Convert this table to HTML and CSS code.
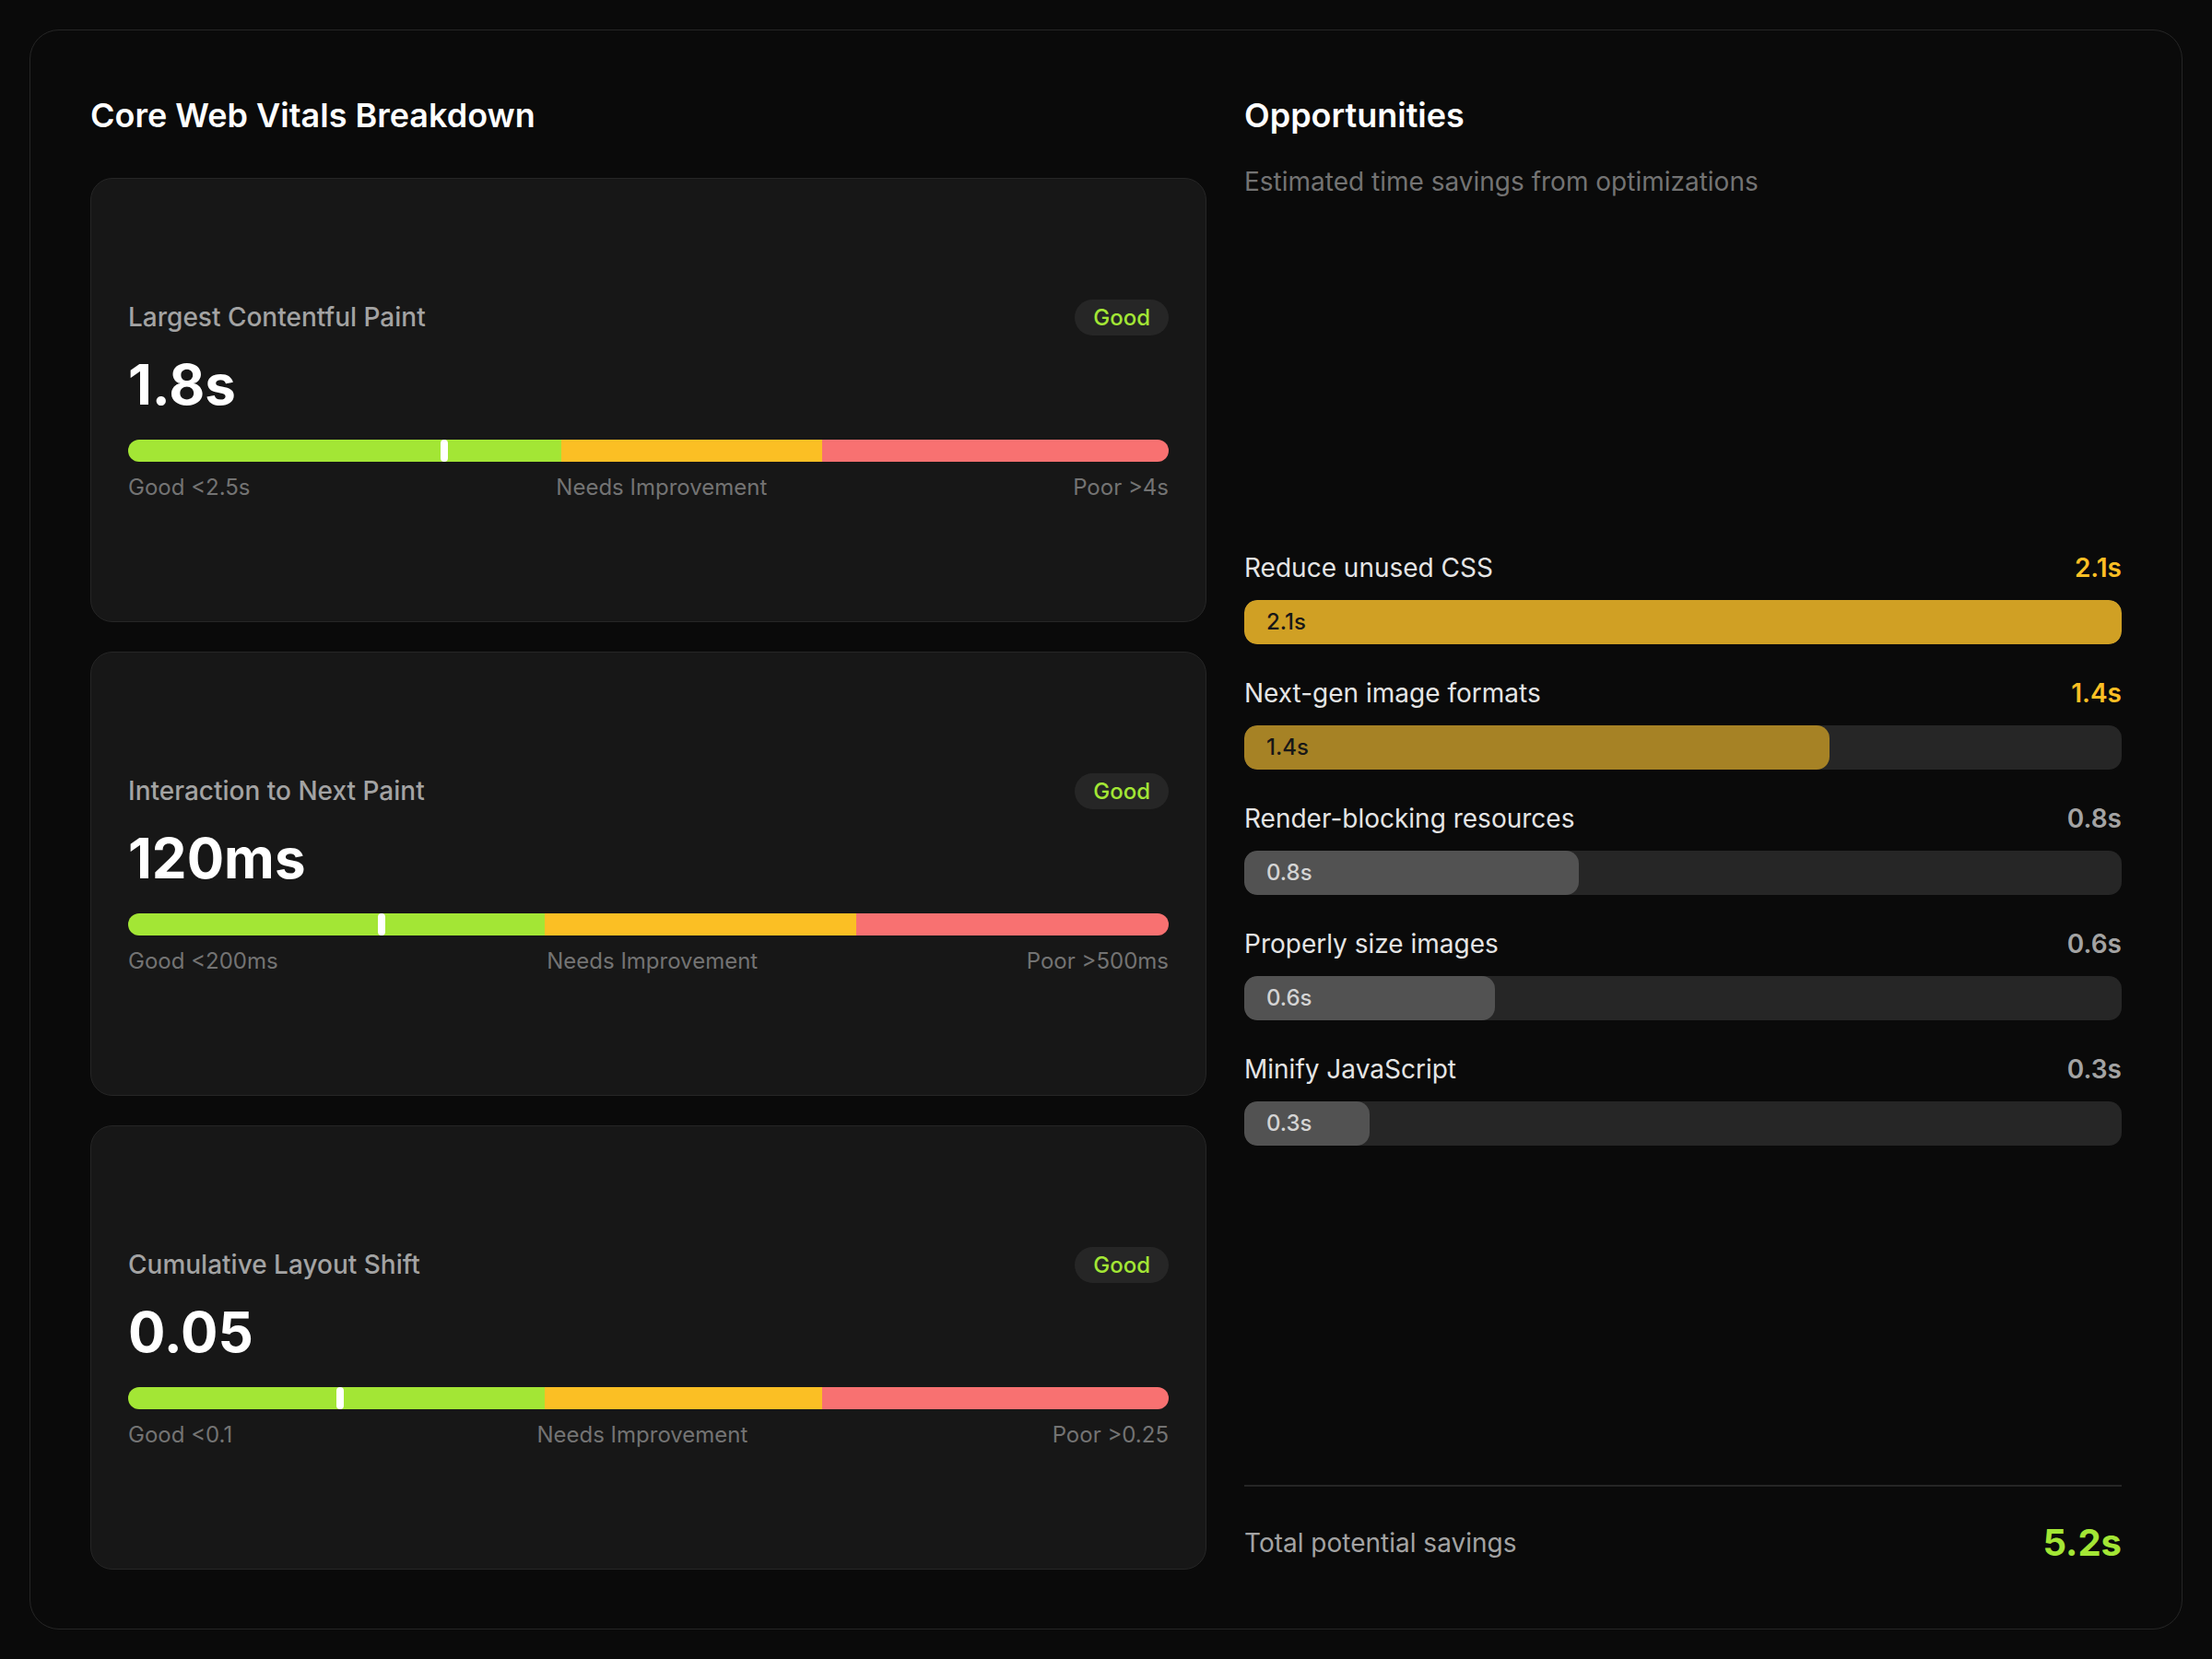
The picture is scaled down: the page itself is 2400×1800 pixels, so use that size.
FILE: index.html
```html
<!DOCTYPE html>
<html lang="en">
<head>
<meta charset="utf-8">
<title>Core Web Vitals</title>
<link rel="stylesheet" href="styles.css">
</head>
<body>
<main class="panel">
  <section class="vitals">
    <h2 class="section-title">Core Web Vitals Breakdown</h2>
    <div class="vital-list">
      <article class="vital">
        <div class="vital-head">
          <span class="vital-name">Largest Contentful Paint</span>
          <span class="badge">Good</span>
        </div>
        <div class="vital-value">1.8s</div>
        <div class="scale">
          <span class="seg seg-good" style="width:41.67%"></span>
          <span class="seg seg-mid" style="width:25%"></span>
          <span class="seg seg-poor"></span>
          <span class="marker" style="left:30%"></span>
        </div>
        <div class="scale-labels">
          <span>Good &lt;2.5s</span>
          <span>Needs Improvement</span>
          <span>Poor &gt;4s</span>
        </div>
      </article>
      <article class="vital">
        <div class="vital-head">
          <span class="vital-name">Interaction to Next Paint</span>
          <span class="badge">Good</span>
        </div>
        <div class="vital-value">120ms</div>
        <div class="scale">
          <span class="seg seg-good" style="width:40%"></span>
          <span class="seg seg-mid" style="width:30%"></span>
          <span class="seg seg-poor"></span>
          <span class="marker" style="left:24%"></span>
        </div>
        <div class="scale-labels">
          <span>Good &lt;200ms</span>
          <span>Needs Improvement</span>
          <span>Poor &gt;500ms</span>
        </div>
      </article>
      <article class="vital">
        <div class="vital-head">
          <span class="vital-name">Cumulative Layout Shift</span>
          <span class="badge">Good</span>
        </div>
        <div class="vital-value">0.05</div>
        <div class="scale">
          <span class="seg seg-good" style="width:40%"></span>
          <span class="seg seg-mid" style="width:26.67%"></span>
          <span class="seg seg-poor"></span>
          <span class="marker" style="left:20%"></span>
        </div>
        <div class="scale-labels">
          <span>Good &lt;0.1</span>
          <span>Needs Improvement</span>
          <span>Poor &gt;0.25</span>
        </div>
      </article>
    </div>
  </section>

  <section class="opps">
    <h2 class="section-title">Opportunities</h2>
    <p class="subtitle">Estimated time savings from optimizations</p>
    <div class="opp-list">
      <div class="opp">
        <div class="opp-head">
          <span class="opp-name">Reduce unused CSS</span>
          <span class="opp-value hot">2.1s</span>
        </div>
        <div class="track"><div class="fill fill-hot1" style="width:100%">2.1s</div></div>
      </div>
      <div class="opp">
        <div class="opp-head">
          <span class="opp-name">Next-gen image formats</span>
          <span class="opp-value hot">1.4s</span>
        </div>
        <div class="track"><div class="fill fill-hot2" style="width:66.67%">1.4s</div></div>
      </div>
      <div class="opp">
        <div class="opp-head">
          <span class="opp-name">Render-blocking resources</span>
          <span class="opp-value">0.8s</span>
        </div>
        <div class="track"><div class="fill fill-cool" style="width:38.1%">0.8s</div></div>
      </div>
      <div class="opp">
        <div class="opp-head">
          <span class="opp-name">Properly size images</span>
          <span class="opp-value">0.6s</span>
        </div>
        <div class="track"><div class="fill fill-cool" style="width:28.57%">0.6s</div></div>
      </div>
      <div class="opp">
        <div class="opp-head">
          <span class="opp-name">Minify JavaScript</span>
          <span class="opp-value">0.3s</span>
        </div>
        <div class="track"><div class="fill fill-cool" style="width:14.29%">0.3s</div></div>
      </div>
    </div>
    <div class="total">
      <span class="total-label">Total potential savings</span>
      <span class="total-value">5.2s</span>
    </div>
  </section>
</main>
</body>
</html>
```

FILE: styles.css
```css
* { box-sizing: border-box; }

html, body {
  margin: 0;
  height: 100%;
}

body {
  background: #0a0a0a;
  padding: 32px;
  font-family: Inter, "Noto Sans", "Liberation Sans", sans-serif;
  color: #ffffff;
}

.panel {
  height: calc(100vh - 64px);
  background: #0a0a0a;
  border: 1px solid #262626;
  border-radius: 32px;
  padding: 65px 65px 64px;
  display: grid;
  grid-template-columns: 1211fr 952fr;
  gap: 41px;
}

.section-title {
  margin: 0;
  font-size: 36px;
  line-height: 54px;
  font-weight: 600;
  color: #ffffff;
}

/* Left column */
.vitals {
  display: flex;
  flex-direction: column;
  min-height: 0;
}

.vitals .section-title {
  margin-bottom: 41px;
}

.vital-list {
  flex: 1;
  display: flex;
  flex-direction: column;
  gap: 32px;
}

.vital {
  flex: 1;
  background: #171717;
  border: 1px solid #262626;
  border-radius: 24px;
  padding: 0 40px;
  display: flex;
  flex-direction: column;
  justify-content: center;
}

.vital-head {
  display: flex;
  align-items: center;
  justify-content: space-between;
  height: 42px;
}

.vital-name {
  font-size: 28px;
  line-height: 42px;
  font-weight: 500;
  color: #a3a3a3;
}

.badge {
  font-size: 24px;
  line-height: 31px;
  font-weight: 500;
  color: #a3e635;
  background: #262626;
  border-radius: 999px;
  padding: 4px 20px;
}

.vital-value {
  margin-top: 16px;
  font-size: 60px;
  line-height: 72px;
  font-weight: 700;
  color: #ffffff;
}

.scale {
  position: relative;
  margin-top: 24px;
  height: 24px;
  border-radius: 999px;
  overflow: hidden;
  display: flex;
}

.seg { display: block; height: 100%; }
.seg-good { background: #a3e635; }
.seg-mid { background: #fbbf24; }
.seg-poor { background: #f87171; flex: 1; }

.marker {
  position: absolute;
  top: 0;
  width: 8px;
  height: 24px;
  background: #ffffff;
  border-radius: 4px;
}

.scale-labels {
  margin-top: 12px;
  display: flex;
  justify-content: space-between;
  font-size: 24px;
  line-height: 32px;
  color: #737373;
}

/* Right column */
.opps {
  display: flex;
  flex-direction: column;
  min-height: 0;
}

.subtitle {
  margin: 24px 0 0;
  font-size: 28px;
  line-height: 42px;
  color: #737373;
}

.opp-list {
  flex: 1;
  display: flex;
  flex-direction: column;
  justify-content: center;
  gap: 32px;
  padding-top: 8px;
}

.opp-head {
  display: flex;
  justify-content: space-between;
  align-items: center;
  margin-bottom: 14px;
}

.opp-name {
  font-size: 28px;
  line-height: 42px;
  color: #e5e5e5;
}

.opp-value {
  font-size: 28px;
  line-height: 42px;
  font-weight: 600;
  color: #a3a3a3;
}

.opp-value.hot { color: #fbbf24; }

.track {
  height: 48px;
  background: #262626;
  border-radius: 14px;
  overflow: hidden;
}

.fill {
  height: 100%;
  border-radius: 14px;
  padding-left: 24px;
  display: flex;
  align-items: center;
  font-size: 24px;
  font-weight: 500;
  color: #d4d4d4;
}

.fill-hot1 { background: rgba(251, 191, 36, 0.8); color: #171717; }
.fill-hot2 { background: rgba(251, 191, 36, 0.6); color: #171717; }
.fill-cool { background: #525252; }

.total {
  border-top: 2px solid #262626;
  padding-top: 32px;
  height: 92px;
  display: flex;
  justify-content: space-between;
  align-items: center;
}

.total-label {
  font-size: 28px;
  line-height: 42px;
  color: #a3a3a3;
}

.total-value {
  font-size: 40px;
  line-height: 52px;
  font-weight: 700;
  color: #a3e635;
}
```
